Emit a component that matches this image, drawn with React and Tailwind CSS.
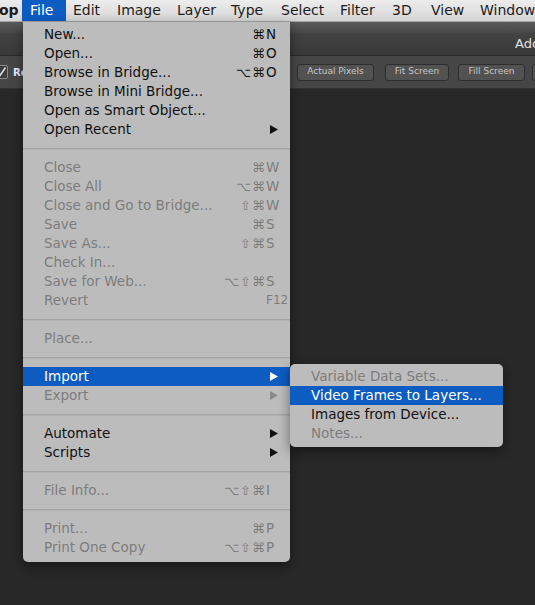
import React from "react";

const FONT = { fontFamily: '"DejaVu Sans", "Liberation Sans", sans-serif' };

const MENU = [
  { l: "New...", m: "⌘", k: "N" },
  { l: "Open...", m: "⌘", k: "O" },
  { l: "Browse in Bridge...", m: "⌥⌘", k: "O" },
  { l: "Browse in Mini Bridge..." },
  { l: "Open as Smart Object..." },
  { l: "Open Recent", arrow: true },
  "sep",
  { l: "Close", m: "⌘", k: "W", d: true },
  { l: "Close All", m: "⌥⌘", k: "W", d: true },
  { l: "Close and Go to Bridge...", m: "⇧⌘", k: "W", d: true },
  { l: "Save", m: "⌘", k: "S", d: true },
  { l: "Save As...", m: "⇧⌘", k: "S", d: true },
  { l: "Check In...", d: true },
  { l: "Save for Web...", m: "⌥⇧⌘", k: "S", d: true },
  { l: "Revert", k: "F12", d: true, small: true },
  "sep",
  { l: "Place...", d: true },
  "sep",
  { l: "Import", arrow: true, active: true },
  { l: "Export", arrow: true, d: true },
  "sep",
  { l: "Automate", arrow: true },
  { l: "Scripts", arrow: true },
  "sep",
  { l: "File Info...", m: "⌥⇧⌘", k: "I", d: true },
  "sep",
  { l: "Print...", m: "⌘", k: "P", d: true },
  { l: "Print One Copy", m: "⌥⇧⌘", k: "P", d: true },
];

const SUB = [
  { l: "Variable Data Sets...", d: true },
  { l: "Video Frames to Layers...", active: true },
  { l: "Images from Device..." },
  { l: "Notes...", d: true },
];

function Arrow({ color }) {
  return (
    <svg width="8" height="9" viewBox="0 0 8 9" className="block">
      <polygon points="0,0 8,4.5 0,9" fill={color} />
    </svg>
  );
}

function MenuRow({ it }) {
  const color = it.active ? "text-white" : it.d ? "text-[#7c7c7c]" : "text-[#111111]";
  const arrowColor = it.active ? "#ffffff" : it.d ? "#8a8a8a" : "#111111";
  return (
    <div
      className={`flex h-[19px] items-center pl-[21px] leading-[19px] ${color} ${
        it.active ? "bg-[#0c5cc2]" : ""
      }`}
    >
      <span className="flex-1 whitespace-nowrap text-[13.5px]">{it.l}</span>
      {it.m && <span className="whitespace-nowrap text-[13px] tracking-[1px]">{it.m}</span>}
      <span className="flex w-[24px] items-center whitespace-nowrap">
        {it.k && <span className={it.small ? "text-[12px]" : "text-[13.5px]"}>{it.k}</span>}
        {it.arrow && (
          <span className="pl-[4px]">
            <Arrow color={arrowColor} />
          </span>
        )}
      </span>
    </div>
  );
}

function Sep() {
  return (
    <div className="flex h-[19px] flex-col justify-center">
      <div className="h-px bg-[#a4a4a4]" />
      <div className="h-px bg-[#b2b2b2]" />
    </div>
  );
}

function Checkbox() {
  return (
    <span className="-ml-[6px] flex h-[14px] w-[14px] shrink-0 items-center justify-center rounded-[2px] border border-[#8a8a8a] bg-[#3c3c3c]">
      <svg width="12" height="12" viewBox="0 0 12 12">
        <path d="M2 6.5 L5 9.5 L10.5 1.5" stroke="#dcdcdc" strokeWidth="1.6" fill="none" />
      </svg>
    </span>
  );
}

function ToolButton({ w, children, ml }) {
  return (
    <div
      className={`flex h-[17px] shrink-0 items-center justify-center rounded-[3px] border border-[#2e2e2e] bg-[#525252] text-[9px] text-[#c6c6c6] ${w} ${ml}`}
    >
      {children}
    </div>
  );
}

export default function App() {
  const bar = [
    ["Edit", "w-[44px]"],
    ["Image", "w-[60px]"],
    ["Layer", "w-[54px]"],
    ["Type", "w-[50px]"],
    ["Select", "w-[59px]"],
    ["Filter", "w-[52px]"],
    ["3D", "w-[39px]"],
    ["View", "w-[49px]"],
    ["Window", "w-[60px]"],
  ];
  return (
    <div className="relative flex h-[605px] w-[535px] flex-col overflow-hidden bg-[#282828]" style={FONT}>
      {/* Mac menu bar */}
      <div className="flex h-[22px] shrink-0 items-center overflow-hidden whitespace-nowrap border-b border-[#a5a5a5] bg-gradient-to-b from-[#ededed] to-[#d5d5d5] text-[14px] text-[#1c1c1c]">
        <span className="w-[23px] shrink-0 -ml-[1px] font-bold">op</span>
        <span className="flex h-[22px] w-[44px] shrink-0 items-center bg-[#0c5cc2] pl-[8px] text-white">File</span>
        <div className="ml-[7px] flex">
          {bar.map(([t, w]) => (
            <span key={t} className={`shrink-0 ${w}`}>
              {t}
            </span>
          ))}
        </div>
      </div>

      {/* window title area */}
      <div className="h-[11px] shrink-0 bg-gradient-to-b from-[#5a5a5a] to-[#474747]" />
      <div className="flex h-[23px] shrink-0 items-center overflow-hidden whitespace-nowrap border-b border-[#2a2a2a] bg-gradient-to-b from-[#434343] to-[#393939] pl-[515px] text-[13px] text-[#e2e2e2]">
        Adobe Photoshop CC
      </div>

      {/* options toolbar */}
      <div className="flex h-[33px] shrink-0 items-center overflow-hidden whitespace-nowrap border-b border-[#333333] bg-[#464646]">
        <div className="flex w-[297px] shrink-0 items-center">
          <div className="flex w-[23px] shrink-0 items-center overflow-hidden">
            <Checkbox />
            <span className="ml-[5px] text-[10px] font-bold text-[#e4ecff]">Resize</span>
          </div>
        </div>
        <ToolButton w="w-[77px]" ml="">Actual Pixels</ToolButton>
        <ToolButton w="w-[64px]" ml="ml-[11px]">Fit Screen</ToolButton>
        <ToolButton w="w-[67px]" ml="ml-[9px]">Fill Screen</ToolButton>
        <ToolButton w="w-[70px]" ml="ml-[7px]">Print Size</ToolButton>
      </div>

      {/* canvas */}
      <div className="flex-1 bg-[#282828]" />

      {/* File dropdown */}
      <div className="absolute left-[23px] top-[22px] w-[267px] rounded-b-[5px] bg-[#bcbcbc] pb-[5px] pt-[3px] shadow-[0_4px_12px_rgba(0,0,0,0.45)]">
        {MENU.map((it, i) => (it === "sep" ? <Sep key={i} /> : <MenuRow key={i} it={it} />))}
      </div>

      {/* Import submenu */}
      <div className="absolute left-[290px] top-[364px] w-[213px] overflow-hidden rounded-[5px] bg-[#bcbcbc] pb-[4px] pt-[3px] shadow-[0_4px_12px_rgba(0,0,0,0.45)]">
        {SUB.map((it, i) => (
          <MenuRow key={i} it={it} />
        ))}
      </div>
    </div>
  );
}
